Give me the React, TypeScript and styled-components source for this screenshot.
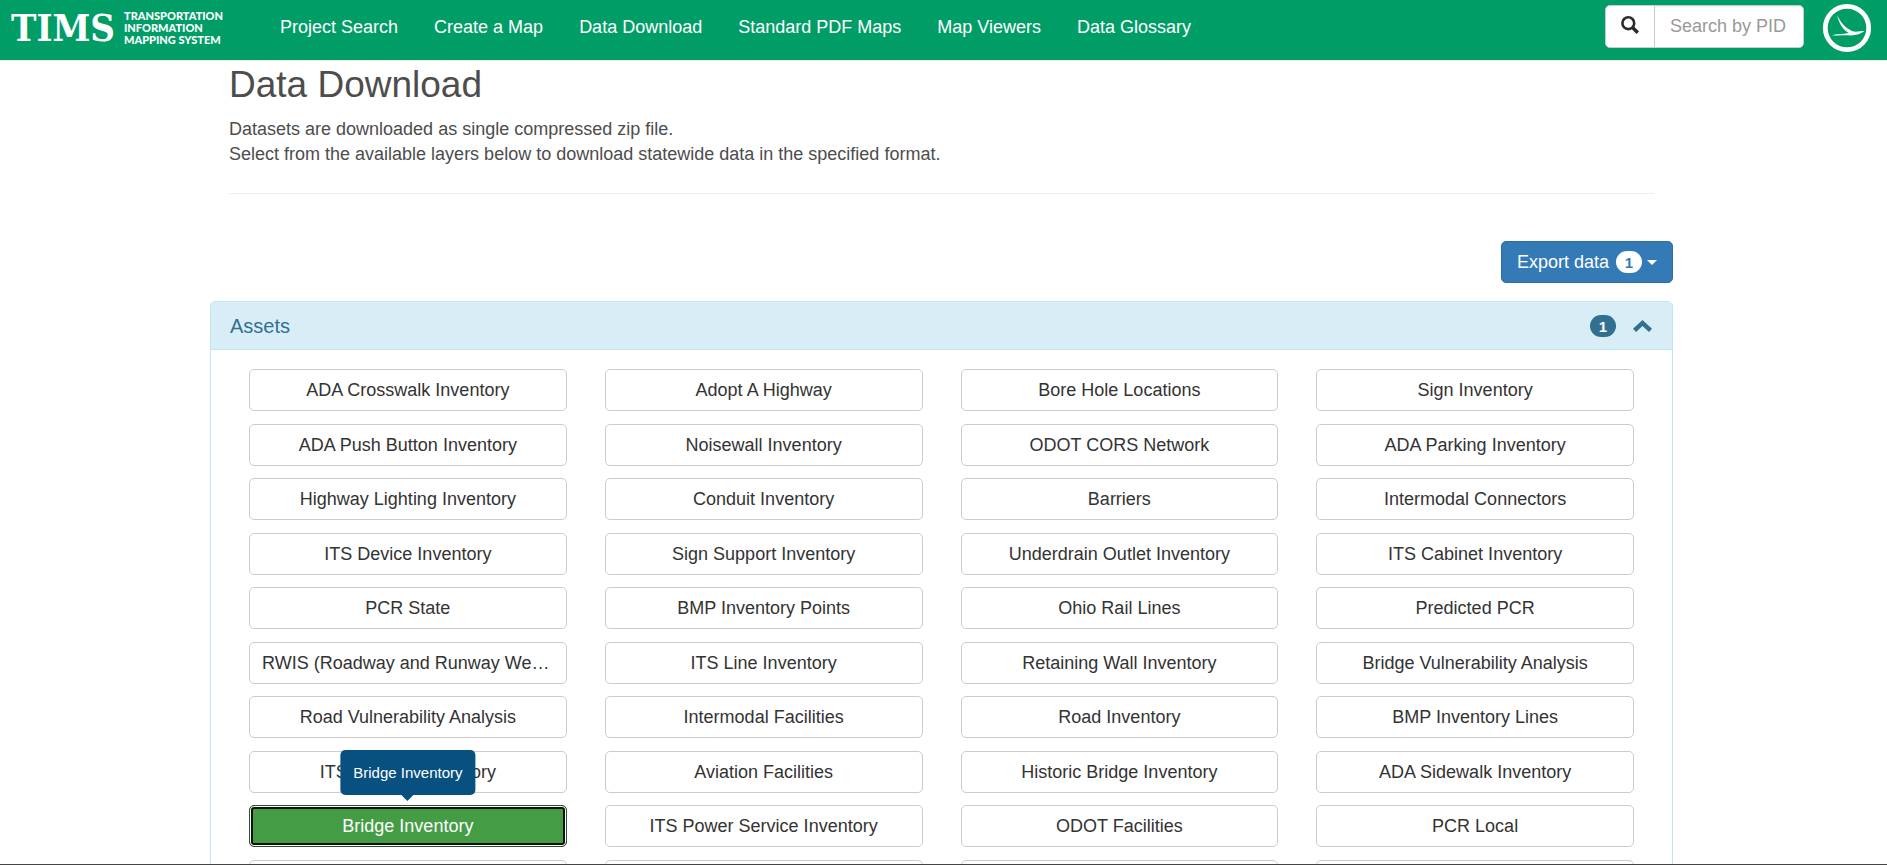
import React from "react";
import styled, { createGlobalStyle } from "styled-components";

const GlobalStyle = createGlobalStyle`
  *, *::before, *::after { box-sizing: border-box; }
  body {
    margin: 0;
    background: #fff;
    color: #4d4d4d;
    font: 18px/25px "Liberation Sans", Arial, sans-serif;
  }
  button, input { font: inherit; }
`;

const Page = styled.div`
  display: flex;
  flex-direction: column;
  height: 100vh;
  overflow: hidden;
  border-bottom: 1px solid #454545;
`;

const TopBar = styled.header`
  display: flex;
  flex: none;
  align-items: flex-start;
  height: 61px;
  padding: 0 15px 0 11px;
  background: #009e66;
  border-bottom: 1px solid #e7e7e7;
`;

const Brand = styled.a`
  display: flex;
  align-items: center;
  flex: none;
  width: 250px;
  height: 56px;
  gap: 9px;
  color: #fff;
  text-decoration: none;
`;

const BrandName = styled.span`
  font: bold 38px/40px "DejaVu Serif Condensed", "DejaVu Serif", serif;
`;

const BrandWords = styled.span`
  font: 900 11px/12px Lato, sans-serif;
  white-space: pre-line;
`;

const Nav = styled.nav`
  display: flex;
  flex: 1;
  gap: 36px;
  padding: 15px 0 0 19px;
`;

const NavLink = styled.a`
  color: #fff;
  text-decoration: none;
  white-space: nowrap;
`;

const SearchGroup = styled.form`
  display: flex;
  width: 199px;
  height: 43px;
  margin: 5px 18px 0 0;
  border: 1px solid #ccc;
  border-radius: 5px;
  background: #fff;
  overflow: hidden;
`;

const SearchButton = styled.button`
  flex: none;
  width: 49px;
  padding: 0 0 4px;
  border: 0;
  border-right: 1px solid #ccc;
  background: #fff;
  line-height: 0;
`;

const SearchInput = styled.input`
  flex: 1;
  min-width: 0;
  padding: 0 15px;
  border: 0;
  outline: 0;
  color: #555;
  box-shadow: inset 0 1px 1px rgba(0, 0, 0, 0.08);
  &::placeholder { color: #999; opacity: 1; }
`;

const AgencyLink = styled.a`
  flex: none;
  width: 50px;
  height: 50px;
  margin-top: 3px;
`;

const Main = styled.main`
  width: 100%;
  padding-right: 4px;
`;

const Container = styled.div`
  max-width: 1463px;
  margin: 0 auto;
`;

const Intro = styled.section`
  margin: 0 19px;
  padding-bottom: 26px;
  border-bottom: 1px solid #eee;
`;

const Title = styled.h1`
  margin: 0;
  padding-top: 4px;
  color: #4d4d4d;
  font-size: 37px;
  font-weight: 400;
  line-height: 40px;
`;

const Lead = styled.p`
  margin: 12px 0 0;
`;

const Actions = styled.div`
  display: flex;
  justify-content: flex-end;
  padding: 47px 0 18px;
`;

const ExportButton = styled.button`
  display: flex;
  align-items: center;
  height: 42px;
  padding: 0 15px;
  border: 1px solid #2e6da4;
  border-radius: 5px;
  background: #337ab7;
  color: #fff;
`;

const Badge = styled.span<{ $inverse?: boolean }>`
  display: inline-block;
  width: 26px;
  height: 22px;
  border-radius: 11px;
  background: ${(p) => (p.$inverse ? "#fff" : "#31708f")};
  color: ${(p) => (p.$inverse ? "#337ab7" : "#fff")};
  font-size: 15px;
  font-weight: 700;
  line-height: 23px;
  text-align: center;
`;

const ExportBadge = styled(Badge)`
  margin: 0 5px 0 7px;
`;

const Caret = styled.span`
  border: 5px solid transparent;
  border-top-color: #fff;
  border-bottom: 0;
`;

const Panel = styled.section`
  border: 1px solid #bce8f1;
  border-radius: 5px;
`;

const PanelHeading = styled.div`
  display: flex;
  align-items: center;
  gap: 17px;
  height: 48px;
  padding: 0 20px 0 19px;
  border-bottom: 1px solid #bce8f1;
  border-radius: 4px 4px 0 0;
  background: #d9edf7;
`;

const PanelTitle = styled.h2`
  flex: 1;
  margin: 0;
  color: #31708f;
  font-size: 20px;
  font-weight: 400;
  line-height: 26px;
`;

const CollapseButton = styled.button`
  padding: 1px 0 0;
  border: 0;
  background: none;
  line-height: 0;
`;

const LayerGrid = styled.div`
  display: grid;
  grid-template-columns: repeat(4, 1fr);
  grid-auto-rows: 55px 54px;
  column-gap: 38px;
  padding: 19px 38px;
`;

const LayerCell = styled.div`
  position: relative;
  min-width: 0;
`;

const LayerButton = styled.button<{ $selected?: boolean }>`
  display: block;
  width: 100%;
  height: 42px;
  padding: 0 12px;
  overflow: hidden;
  text-overflow: ellipsis;
  white-space: nowrap;
  text-align: center;
  border: 1px solid ${(p) => (p.$selected ? "#255625" : "#ccc")};
  border-radius: 5px;
  background: ${(p) => (p.$selected ? "#449d44" : "#fff")};
  color: ${(p) => (p.$selected ? "#fff" : "#333")};
  box-shadow: ${(p) => (p.$selected ? "inset 0 0 0 1px #fff, inset 0 0 0 3px #101010" : "none")};
`;

const Tooltip = styled.span`
  position: absolute;
  z-index: 1;
  bottom: calc(100% + 10px);
  left: 50%;
  transform: translateX(-50%);
  padding: 10px 13px;
  border-radius: 5px;
  background: #07507f;
  color: #fff;
  font-size: 15px;
  white-space: nowrap;
  &::after {
    content: "";
    position: absolute;
    top: 100%;
    left: 50%;
    margin-left: -6px;
    border: 6px solid transparent;
    border-top-color: #07507f;
    border-bottom: 0;
  }
`;

const navItems = [
  "Project Search",
  "Create a Map",
  "Data Download",
  "Standard PDF Maps",
  "Map Viewers",
  "Data Glossary",
];

const layers = [
  "ADA Crosswalk Inventory", "Adopt A Highway", "Bore Hole Locations", "Sign Inventory",
  "ADA Push Button Inventory", "Noisewall Inventory", "ODOT CORS Network", "ADA Parking Inventory",
  "Highway Lighting Inventory", "Conduit Inventory", "Barriers", "Intermodal Connectors",
  "ITS Device Inventory", "Sign Support Inventory", "Underdrain Outlet Inventory", "ITS Cabinet Inventory",
  "PCR State", "BMP Inventory Points", "Ohio Rail Lines", "Predicted PCR",
  "RWIS (Roadway and Runway Weather)", "ITS Line Inventory", "Retaining Wall Inventory", "Bridge Vulnerability Analysis",
  "Road Vulnerability Analysis", "Intermodal Facilities", "Road Inventory", "BMP Inventory Lines",
  "ITS Camera Inventory", "Aviation Facilities", "Historic Bridge Inventory", "ADA Sidewalk Inventory",
  "Bridge Inventory", "ITS Power Service Inventory", "ODOT Facilities", "PCR Local",
  "", "", "", "",
];

const selectedLayer = "Bridge Inventory";

export default function App() {
  return (
    <Page>
      <GlobalStyle />
      <TopBar>
        <Brand href="#">
          <BrandName>TIMS</BrandName>
          <BrandWords>{"TRANSPORTATION\nINFORMATION\nMAPPING SYSTEM"}</BrandWords>
        </Brand>
        <Nav>
          {navItems.map((item) => (
            <NavLink href="#" key={item}>{item}</NavLink>
          ))}
        </Nav>
        <SearchGroup>
          <SearchButton type="button" aria-label="Search">
            <svg width="18" height="18" viewBox="0 0 18 18" fill="none" stroke="#2b2b2b">
              <circle cx="7.3" cy="7.2" r="5.9" strokeWidth="2.6" />
              <path d="M11.3 11.3 16.8 16.8" strokeWidth="3.4" />
            </svg>
          </SearchButton>
          <SearchInput type="text" placeholder="Search by PID" aria-label="Search by PID" />
        </SearchGroup>
        <AgencyLink href="#" aria-label="ODOT">
          <svg width="50" height="50" viewBox="0 0 50 50">
            <circle cx="25" cy="25" r="21.7" fill="none" stroke="#fff" strokeWidth="4.8" />
            <path
              d="M15.2 12C18 18.5 23 25 30.5 28.2C34 29.3 38 28 42.5 28C39 30.6 34 32.6 28 32.4C21 32.2 15 32.8 10 32.2C16 30.6 22 31.6 26.8 29.8C20.5 26.5 16.5 19.5 15.2 12Z"
              fill="#fff"
            />
          </svg>
        </AgencyLink>
      </TopBar>
      <Main>
        <Container>
          <Intro>
            <Title>Data Download</Title>
            <Lead>
              Datasets are downloaded as single compressed zip file.
              <br />
              Select from the available layers below to download statewide data in the specified format.
            </Lead>
          </Intro>
          <Actions>
            <ExportButton type="button">
              Export data
              <ExportBadge $inverse>1</ExportBadge>
              <Caret />
            </ExportButton>
          </Actions>
          <Panel>
            <PanelHeading>
              <PanelTitle>Assets</PanelTitle>
              <Badge>1</Badge>
              <CollapseButton type="button" aria-label="Collapse Assets">
                <svg width="19" height="12" viewBox="0 0 19 12">
                  <path d="M9.5 0 19 8.8 16 12 9.5 6 3 12 0 8.8Z" fill="#31708f" />
                </svg>
              </CollapseButton>
            </PanelHeading>
            <LayerGrid>
              {layers.map((name, i) => (
                <LayerCell key={i}>
                  {name === selectedLayer && <Tooltip role="tooltip">{name}</Tooltip>}
                  <LayerButton type="button" $selected={name === selectedLayer}>{name}</LayerButton>
                </LayerCell>
              ))}
            </LayerGrid>
          </Panel>
        </Container>
      </Main>
    </Page>
  );
}
